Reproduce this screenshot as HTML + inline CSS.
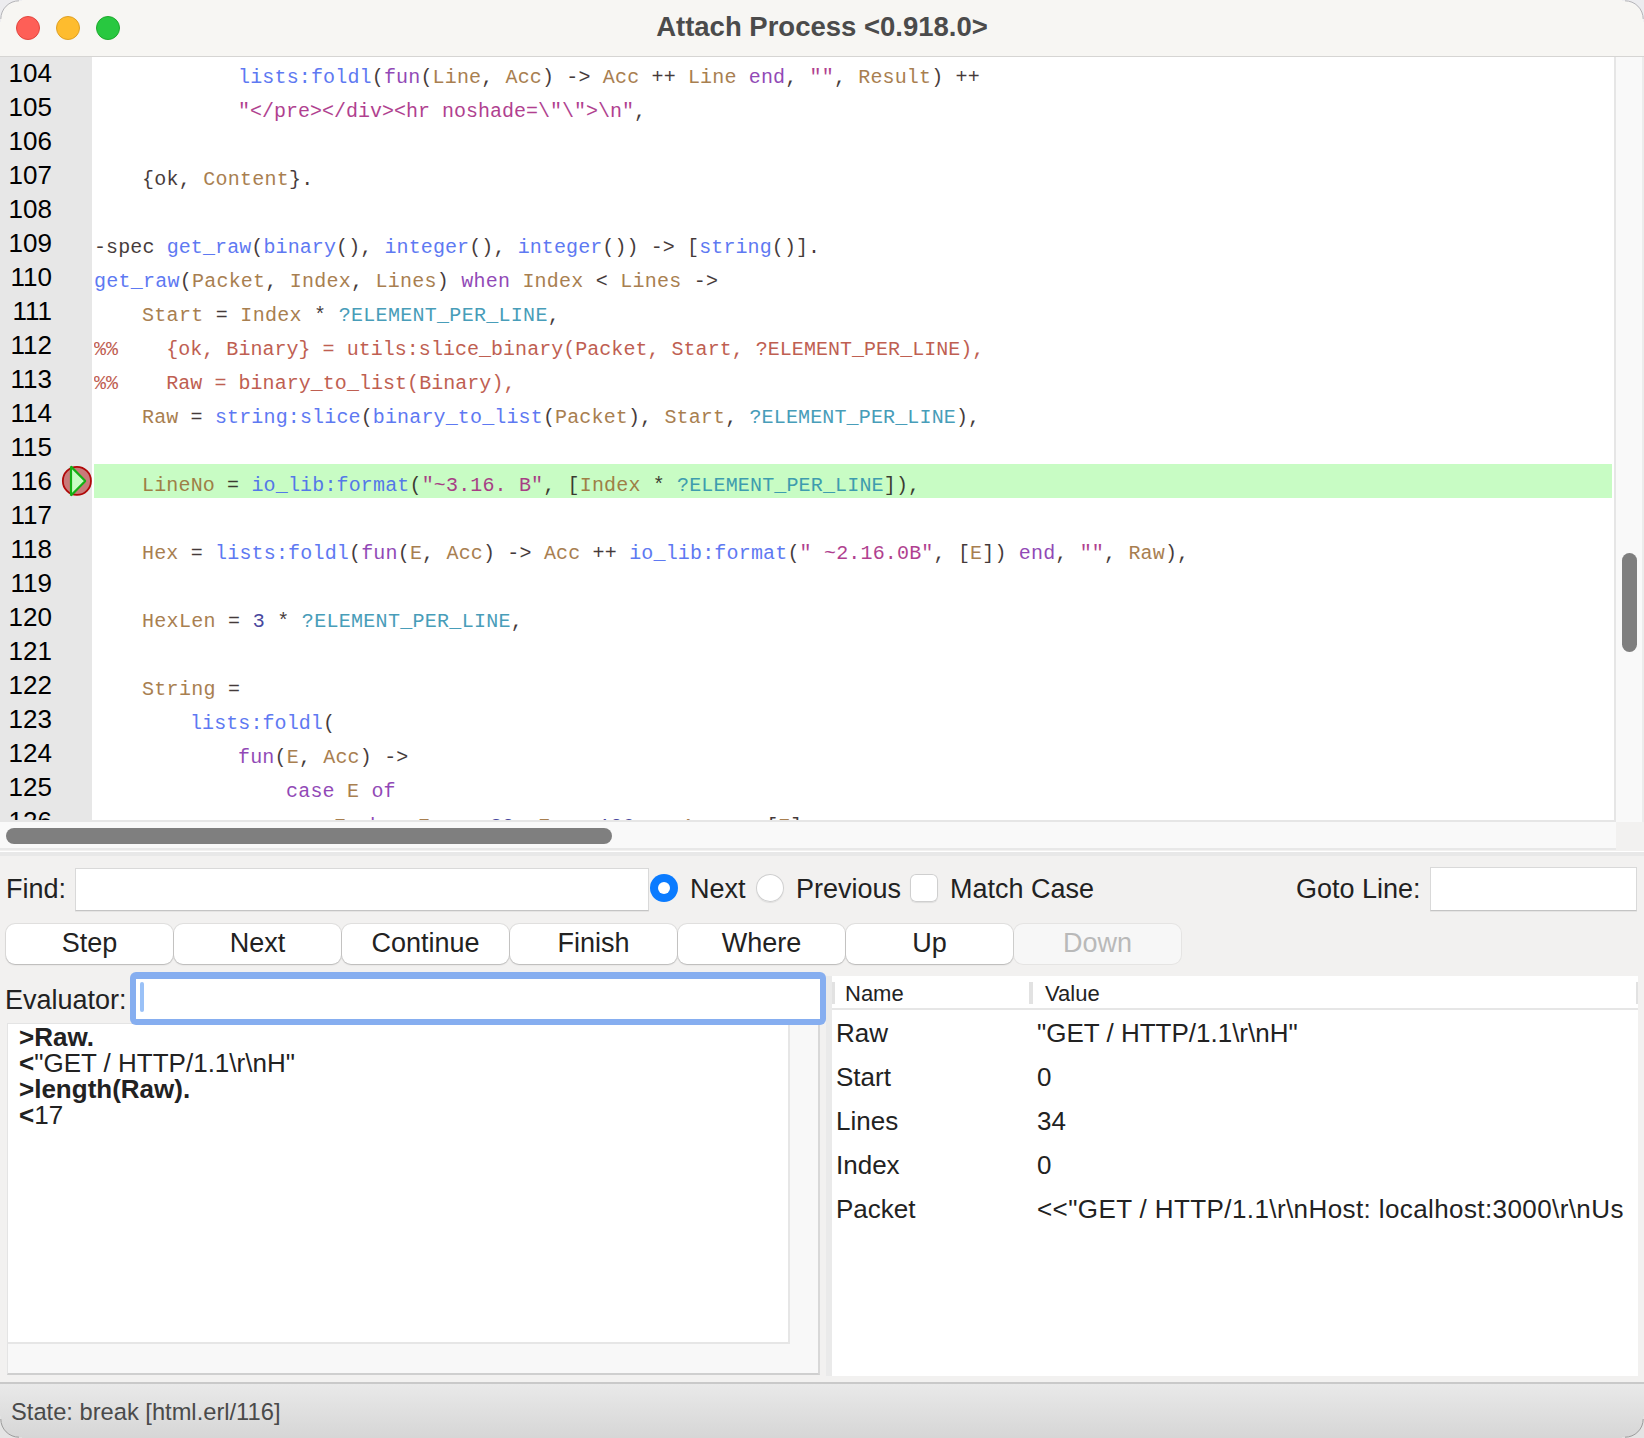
<!DOCTYPE html>
<html><head><meta charset="utf-8">
<style>
*{box-sizing:border-box;margin:0;padding:0}
html,body{width:1644px;height:1438px;overflow:hidden;background:#f2f1f0}
body{position:relative;font-family:"Liberation Sans",sans-serif;color:#222}
.abs{position:absolute}
#titlebar{left:0;top:0;width:1644px;height:57px;background:#f7f6f3;border-bottom:1px solid #d6d5d3}
.tl{position:absolute;width:24px;height:24px;border-radius:50%;top:16px}
#title{left:0;top:-2px;width:1644px;text-align:center;font-weight:bold;font-size:27.5px;line-height:57px;color:#4b4b4b}
#code{left:0;top:57px;width:1614px;height:763px;background:#fff;overflow:hidden}
#gutter{left:0;top:0;width:92px;height:763px;background:#e7e7e7}
.ln{position:absolute;left:0;width:52px;text-align:right;font-size:26px;line-height:34px;color:#000;margin-top:-4.5px}
.cl{position:absolute;left:94px;font-family:"Liberation Mono",monospace;font-size:20px;line-height:34px;white-space:pre;color:#1c1010;opacity:0.82}
.v{color:#96642a}
.f{color:#3b5cf0}
.k{color:#7b1fa8}
.s{color:#a01578}
.m{color:#2088aa}
.c{color:#b23c2c}
.n{color:#20208a}

#vtrack{left:1614px;top:57px;width:30px;height:765px;background:#f9f9f9;border-left:2px solid #e6e6e6;border-right:2px solid #ececec}
#vthumb{left:1622px;top:553px;width:15px;height:99px;border-radius:8px;background:#7f7f7f}
#htrack{left:0;top:820px;width:1616px;height:30px;background:#f9f9f9;border-top:2px solid #e6e6e6;border-bottom:2px solid #e8e8e8}
#hthumb{left:6px;top:828px;width:606px;height:16px;border-radius:8px;background:#7f7f7f}
#hcorner{left:1616px;top:822px;width:24px;height:28px;background:#f2f1f0}
#pstrip{left:0;top:851px;width:1644px;height:5px;background:#e8e8e8;border-top:1px solid #fff}
.lbl{position:absolute;font-size:27px;line-height:30px;color:#222;white-space:pre}
.inp{position:absolute;background:#fff;border:1px solid #d9d9d9;border-bottom-color:#c4c4c4;box-shadow:0 1px 0 rgba(0,0,0,0.05)}
.btn{position:absolute;top:924px;width:167px;height:40px;background:#fff;border-radius:9px;box-shadow:0 0 0 1px rgba(0,0,0,0.07),0 1px 1.5px rgba(0,0,0,0.18);font-size:27px;line-height:39px;text-align:center;color:#222}
.radio{position:absolute;width:28px;height:28px;border-radius:50%}
#evalbox{left:7px;top:1023px;width:813px;height:352px;background:#f8f8f8;border:1px solid #e4e4e4;border-bottom:2px solid #cfcfcf;border-right:2px solid #d8d8d8}
#evaltext{left:8px;top:1024px;width:782px;height:320px;background:#fff;border-right:2px solid #e6e6e6;border-bottom:2px solid #e6e6e6}
.eo{position:absolute;left:19px;font-size:26px;line-height:26px;color:#222;white-space:pre}
#table{left:826px;top:976px;width:812px;height:400px;background:#fff;border-left:6px solid #eaeaea}
.th{position:absolute;font-size:22px;line-height:26px;color:#222}
.tr{position:absolute;font-size:26px;line-height:30px;color:#222;white-space:pre}
#status{left:0;top:1382px;width:1644px;height:56px;background:linear-gradient(#e9e9e9,#d6d6d6);border-top:2px solid #c9c9c9}
</style></head><body>
<div id="titlebar" class="abs">
  <div class="tl" style="left:16px;background:#fe5f57;border:1px solid #e2463f"></div>
  <div class="tl" style="left:56px;background:#febc2e;border:1px solid #dfa023"></div>
  <div class="tl" style="left:96px;background:#28c840;border:1px solid #1daa2c"></div>
  <div id="title" class="abs">Attach Process &lt;0.918.0&gt;</div>
</div>
<div id="code" class="abs">
  <div id="gutter" class="abs"></div>
  <div class="abs" style="left:94px;top:407px;width:1518px;height:34px;background:#c8fcc4"></div>
  <svg class="abs" style="left:60px;top:407px" width="34" height="34" viewBox="0 0 34 34"><circle cx="16.9" cy="16.9" r="14.05" fill="#c97a7a" stroke="#b00808" stroke-width="1.8"/><path d="M11 2.6 L11 31.4 L25.3 16.95 Z" fill="#c8fdc4" stroke="#14b014" stroke-width="2.2" stroke-linejoin="bevel"/></svg>
<div id="lines">
<div class="ln" style="top:3.7px">104</div>
<div class="ln" style="top:37.7px">105</div>
<div class="ln" style="top:71.7px">106</div>
<div class="ln" style="top:105.7px">107</div>
<div class="ln" style="top:139.7px">108</div>
<div class="ln" style="top:173.7px">109</div>
<div class="ln" style="top:207.7px">110</div>
<div class="ln" style="top:241.7px">111</div>
<div class="ln" style="top:275.7px">112</div>
<div class="ln" style="top:309.7px">113</div>
<div class="ln" style="top:343.7px">114</div>
<div class="ln" style="top:377.7px">115</div>
<div class="ln" style="top:411.7px">116</div>
<div class="ln" style="top:445.7px">117</div>
<div class="ln" style="top:479.7px">118</div>
<div class="ln" style="top:513.7px">119</div>
<div class="ln" style="top:547.7px">120</div>
<div class="ln" style="top:581.7px">121</div>
<div class="ln" style="top:615.7px">122</div>
<div class="ln" style="top:649.7px">123</div>
<div class="ln" style="top:683.7px">124</div>
<div class="ln" style="top:717.7px">125</div>
<div class="ln" style="top:751.7px">126</div>
<div class="cl" style="top:3.7px;left:238px;letter-spacing:0.157px"><span class="f">lists:foldl</span>(<span class="k">fun</span>(<span class="v">Line</span>, <span class="v">Acc</span>) -&gt; <span class="v">Acc</span> ++ <span class="v">Line</span> <span class="k">end</span>, <span class="s">&quot;&quot;</span>, <span class="v">Result</span>) ++</div>
<div class="cl" style="top:37.7px;left:238px;letter-spacing:0px"><span class="s">&quot;&lt;/pre&gt;&lt;/div&gt;&lt;hr noshade=\&quot;\&quot;&gt;\n&quot;</span>,</div>
<div class="cl" style="top:105.7px;left:142px;letter-spacing:0.25px">{ok, <span class="v">Content</span>}.</div>
<div class="cl" style="top:173.7px;left:94px;letter-spacing:0.1px">-spec <span class="f">get_raw</span>(<span class="f">binary</span>(), <span class="f">integer</span>(), <span class="f">integer</span>()) -&gt; [<span class="f">string</span>()].</div>
<div class="cl" style="top:207.7px;left:94px;letter-spacing:0.235px"><span class="f">get_raw</span>(<span class="v">Packet</span>, <span class="v">Index</span>, <span class="v">Lines</span>) <span class="k">when</span> <span class="v">Index</span> &lt; <span class="v">Lines</span> -&gt;</div>
<div class="cl" style="top:241.7px;left:142px;letter-spacing:0.29px"><span class="v">Start</span> = <span class="v">Index</span> * <span class="m">?ELEMENT_PER_LINE</span>,</div>
<div class="cl" style="top:275.7px;left:94px;letter-spacing:0.03px"><span class="c">%%    {ok, Binary} = utils:slice_binary(Packet, Start, ?ELEMENT_PER_LINE),</span></div>
<div class="cl" style="top:309.7px;left:94px;letter-spacing:0.04px"><span class="c">%%    Raw = binary_to_list(Binary),</span></div>
<div class="cl" style="top:343.7px;left:142px;letter-spacing:0.145px"><span class="v">Raw</span> = <span class="f">string:slice</span>(<span class="f">binary_to_list</span>(<span class="v">Packet</span>), <span class="v">Start</span>, <span class="m">?ELEMENT_PER_LINE</span>),</div>
<div class="cl" style="top:411.7px;left:142px;letter-spacing:0.156px"><span class="v">LineNo</span> = <span class="f">io_lib:format</span>(<span class="s">&quot;~3.16. B&quot;</span>, [<span class="v">Index</span> * <span class="m">?ELEMENT_PER_LINE</span>]),</div>
<div class="cl" style="top:479.7px;left:142px;letter-spacing:0.174px"><span class="v">Hex</span> = <span class="f">lists:foldl</span>(<span class="k">fun</span>(<span class="v">E</span>, <span class="v">Acc</span>) -&gt; <span class="v">Acc</span> ++ <span class="f">io_lib:format</span>(<span class="s">&quot; ~2.16.0B&quot;</span>, [<span class="v">E</span>]) <span class="k">end</span>, <span class="s">&quot;&quot;</span>, <span class="v">Raw</span>),</div>
<div class="cl" style="top:547.7px;left:142px;letter-spacing:0.29px"><span class="v">HexLen</span> = <span class="n">3</span> * <span class="m">?ELEMENT_PER_LINE</span>,</div>
<div class="cl" style="top:615.7px;left:142px;letter-spacing:0.3px"><span class="v">String</span> =</div>
<div class="cl" style="top:649.7px;left:190px;letter-spacing:0.08px"><span class="f">lists:foldl</span>(</div>
<div class="cl" style="top:683.7px;left:238px;letter-spacing:0.17px"><span class="k">fun</span>(<span class="v">E</span>, <span class="v">Acc</span>) -&gt;</div>
<div class="cl" style="top:717.7px;left:286px;letter-spacing:0.2px"><span class="k">case</span> <span class="v">E</span> <span class="k">of</span></div>
<div class="cl" style="top:752.5px;left:334px;letter-spacing:0.0px"><span class="v">E</span> <span class="k">when</span> <span class="v">E</span>  &gt;= <span class="n">32</span>, <span class="v">E</span> =&lt; <span class="n">126</span> -&gt; <span class="v">Acc</span> ++ [<span class="v">E</span>];</div>
</div>
</div>

<div id="vtrack" class="abs"></div>
<div id="vthumb" class="abs"></div>
<div id="htrack" class="abs"></div>
<div id="hthumb" class="abs"></div>
<div id="hcorner" class="abs"></div>
<div id="pstrip" class="abs"></div>

<div class="lbl" style="left:6px;top:874px">Find:</div>
<div class="inp" style="left:75px;top:868px;width:574px;height:43px"></div>
<div class="radio" style="left:650px;top:874px;background:#0a7bff;"><div style="position:absolute;left:8px;top:8px;width:12px;height:12px;border-radius:50%;background:#fff"></div></div>
<div class="lbl" style="left:690px;top:874px">Next</div>
<div class="radio" style="left:756px;top:874px;background:#fff;box-shadow:0 0 0 1px #cfcfcf inset,0 1px 1px rgba(0,0,0,0.08)"></div>
<div class="lbl" style="left:796px;top:874px">Previous</div>
<div class="abs" style="left:910px;top:874px;width:28px;height:28px;border-radius:6px;background:#fff;box-shadow:0 0 0 1px #cfcfcf inset,0 1px 1px rgba(0,0,0,0.08)"></div>
<div class="lbl" style="left:950px;top:874px">Match Case</div>
<div class="lbl" style="left:1296px;top:874px">Goto Line:</div>
<div class="inp" style="left:1430px;top:867px;width:207px;height:44px"></div>

<div class="btn" style="left:6px">Step</div>
<div class="btn" style="left:174px">Next</div>
<div class="btn" style="left:342px">Continue</div>
<div class="btn" style="left:510px">Finish</div>
<div class="btn" style="left:678px">Where</div>
<div class="btn" style="left:846px">Up</div>
<div class="btn" style="left:1014px;background:#f7f7f7;color:#b9b9b9;box-shadow:0 0 0 1px rgba(0,0,0,0.05)">Down</div>

<div class="lbl" style="left:5px;top:985px">Evaluator:</div>
<div id="evalbox" class="abs"></div>
<div id="evaltext" class="abs"></div>
<div class="abs" style="left:130px;top:972px;width:696px;height:53px;border-radius:6px;background:#86aef0"></div>
<div class="abs" style="left:136px;top:979px;width:684px;height:40px;background:#fff"></div>
<div class="abs" style="left:140px;top:982px;width:4px;height:30px;border-radius:2px;background:#9ac1f7"></div>

<div class="eo" style="top:1024px"><b>&gt;Raw.</b></div>
<div class="eo" style="top:1050px"><b>&lt;</b>"GET / HTTP/1.1\r\nH"</div>
<div class="eo" style="top:1076px"><b>&gt;length(Raw).</b></div>
<div class="eo" style="top:1102px"><b>&lt;</b>17</div>

<div id="table" class="abs"></div>
<div class="abs" style="left:832px;top:982px;width:3px;height:22px;background:#e2e2e2"></div>
<div class="abs" style="left:1029px;top:982px;width:4px;height:22px;background:#e2e2e2"></div>
<div class="abs" style="left:832px;top:1008px;width:806px;height:2px;background:#e6e6e6"></div>
<div class="abs" style="left:1636px;top:982px;width:2px;height:22px;background:#e2e2e2"></div>
<div class="th" style="left:845px;top:981px">Name</div>
<div class="th" style="left:1045px;top:981px">Value</div>
<div class="tr" style="left:836px;top:1018px">Raw</div><div class="tr" style="left:1037px;top:1018px">"GET / HTTP/1.1\r\nH"</div>
<div class="tr" style="left:836px;top:1062px">Start</div><div class="tr" style="left:1037px;top:1062px">0</div>
<div class="tr" style="left:836px;top:1106px">Lines</div><div class="tr" style="left:1037px;top:1106px">34</div>
<div class="tr" style="left:836px;top:1150px">Index</div><div class="tr" style="left:1037px;top:1150px">0</div>
<div class="tr" style="left:836px;top:1194px">Packet</div><div class="tr" style="left:1037px;top:1194px;letter-spacing:0.4px">&lt;&lt;"GET / HTTP/1.1\r\nHost: localhost:3000\r\nUs</div>

<div id="status" class="abs"><div class="abs" style="left:11px;top:13px;font-size:23.7px;line-height:30px;color:#4a4a4a">State: break [html.erl/116]</div></div>


<svg class="abs" style="left:0;top:0;z-index:50" width="22" height="22" viewBox="0 0 22 22"><path d="M0 0 H19 A18 18 0 0 0 1 18 V0 Z" fill="#ececef"/><path d="M0 0 H22 V0.8 H19 A18 18 0 0 0 0.8 19 V22 H0 Z" fill="#ececef"/><path d="M19 0.8 A18.2 18.2 0 0 0 0.8 19" fill="none" stroke="#b4b4b8" stroke-width="1"/></svg>
<svg class="abs" style="left:1622px;top:0;z-index:50" width="22" height="22" viewBox="0 0 22 22"><path d="M22 0 H0 V0.8 H3 A18.2 18.2 0 0 1 21.2 19 V22 H22 Z" fill="#ececef"/><path d="M3 0.8 A18.2 18.2 0 0 1 21.2 19" fill="none" stroke="#b4b4b8" stroke-width="1"/></svg>
<svg class="abs" style="left:0;top:1416px;z-index:50" width="22" height="22" viewBox="0 0 22 22"><path d="M0 22 H22 V21.2 H19 A18.2 18.2 0 0 1 0.8 3 V0 H0 Z" fill="#e4e4e4"/><path d="M19 21.2 A18.2 18.2 0 0 1 0.8 3" fill="none" stroke="#9c9c9c" stroke-width="1"/></svg>
<svg class="abs" style="left:1622px;top:1416px;z-index:50" width="22" height="22" viewBox="0 0 22 22"><path d="M22 22 H0 V21.2 H3 A18.2 18.2 0 0 0 21.2 3 V0 H22 Z" fill="#e4e4e4"/><path d="M3 21.2 A18.2 18.2 0 0 0 21.2 3" fill="none" stroke="#9c9c9c" stroke-width="1"/></svg>
</body></html>
